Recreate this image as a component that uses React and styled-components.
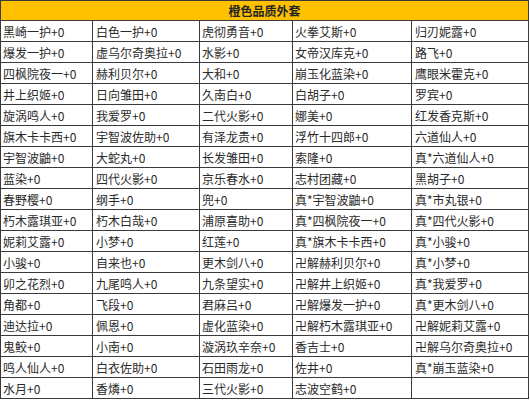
import React from 'react'
import styled, { createGlobalStyle } from 'styled-components'

const GlobalStyle = createGlobalStyle`
*{
  margin: 0;
  padding: 0;
  box-sizing: border-box;
}
body{
  background: #fff;
  font-family: 'Noto Sans CJK SC', 'Noto Sans', sans-serif;
}
`

const COLS = [92, 107, 93, 119, 117]

const Table = styled.div`
width: 529px;
border-left: 1px solid #3a3a3a;
border-top: 1px solid #3a3a3a;
display: grid;
grid-template-columns: ${COLS.map(c => c + 'px').join(' ')};
`

const Header = styled.div`
grid-column: 1 / -1;
height: 20px;
background: #ffc000;
border-right: 1px solid #3a3a3a;
border-bottom: 1px solid #3a3a3a;
display: flex;
align-items: center;
justify-content: center;
font-size: 12px;
font-weight: 700;
color: #262626;
`

const Cell = styled.div`
height: 21px;
border-right: 1px solid #3a3a3a;
border-bottom: 1px solid #3a3a3a;
display: flex;
align-items: center;
padding-left: ${p => p.$pad}px;
font-size: 12px;
color: #2a2a2a;
white-space: nowrap;
overflow: hidden;
`

const rows = [
  ['黑崎一护', '白色一护', '虎彻勇音', '火拳艾斯', '归刃妮露'],
  ['爆发一护', '虚乌尔奇奥拉', '水影', '女帝汉库克', '路飞'],
  ['四枫院夜一', '赫利贝尔', '大和', '崩玉化蓝染', '鹰眼米霍克'],
  ['井上织姬', '日向雏田', '久南白', '白胡子', '罗宾'],
  ['旋涡鸣人', '我爱罗', '二代火影', '娜美', '红发香克斯'],
  ['旗木卡卡西', '宇智波佐助', '有泽龙贵', '浮竹十四郎', '六道仙人'],
  ['宇智波鼬', '大蛇丸', '长发雏田', '索隆', '真*六道仙人'],
  ['蓝染', '四代火影', '京乐春水', '志村团藏', '黑胡子'],
  ['春野樱', '纲手', '兜', '真*宇智波鼬', '真*市丸银'],
  ['朽木露琪亚', '朽木白哉', '浦原喜助', '真*四枫院夜一', '真*四代火影'],
  ['妮莉艾露', '小梦', '红莲', '真*旗木卡卡西', '真*小骏'],
  ['小骏', '自来也', '更木剑八', '卍解赫利贝尔', '真*小梦'],
  ['卯之花烈', '九尾鸣人', '九条望实', '卍解井上织姬', '真*我爱罗'],
  ['角都', '飞段', '君麻吕', '卍解爆发一护', '真*更木剑八'],
  ['迪达拉', '佩恩', '虚化蓝染', '卍解朽木露琪亚', '卍解妮莉艾露'],
  ['鬼鲛', '小南', '漩涡玖辛奈', '香吉士', '卍解乌尔奇奥拉'],
  ['鸣人仙人', '白衣佐助', '石田雨龙', '佐井', '真*崩玉蓝染'],
  ['水月', '香燐', '三代火影', '志波空鹤', ''],
]

const pads = [2, 3, 2, 2, 3]

export default function App() {
  return (
    <>
      <GlobalStyle />
      <Table>
        <Header>橙色品质外套</Header>
        {rows.map((row, i) =>
          row.map((name, j) => (
            <Cell key={i + '-' + j} $pad={pads[j]}>
              {name ? name + '+0' : ''}
            </Cell>
          ))
        )}
      </Table>
    </>
  )
}
